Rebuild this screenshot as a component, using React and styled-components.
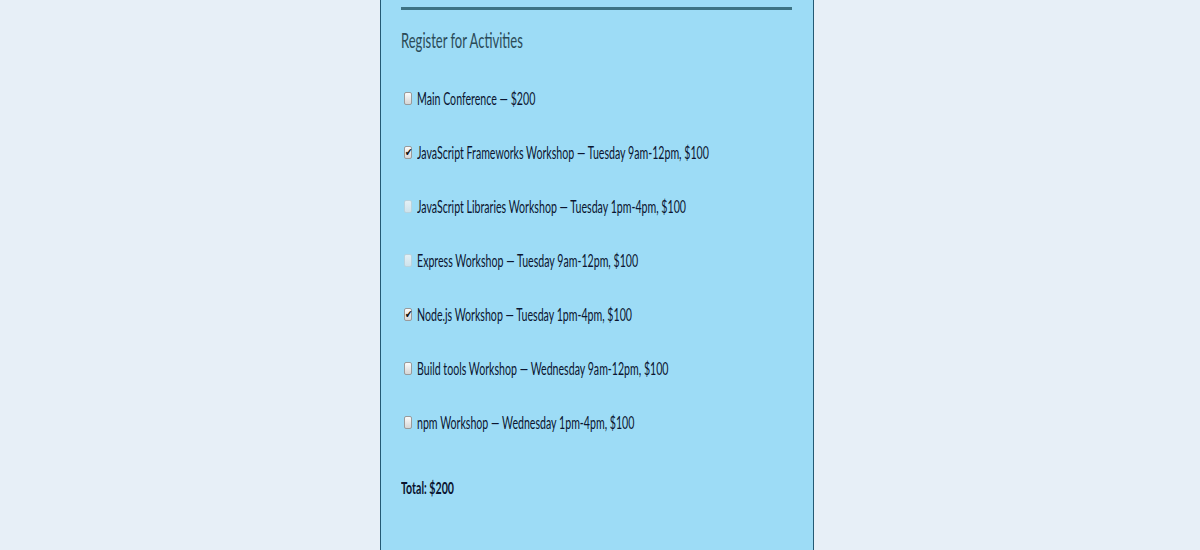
import React from "react";
import styled, { createGlobalStyle } from "styled-components";

const SQUEEZE = 0.624;

const Global = createGlobalStyle`
  html, body { margin: 0; padding: 0; }
  body {
    background: #e7eff7;
    font-family: Lato, "Open Sans", sans-serif;
    height: 550px;
    overflow: hidden;
  }
`;

const Page = styled.div`
  display: flex;
  justify-content: center;
  padding-right: 6px;
  height: 550px;
`;

const Card = styled.form`
  width: 391px;
  padding: 0 21px 0 20px;
  background: #9ddcf6;
  border-left: 1px solid #245a74;
  border-right: 1px solid #245a74;
  display: flex;
  flex-direction: column;
`;

const Rule = styled.hr`
  margin: 7px 0 0;
  border: none;
  height: 3px;
  background: #3d7384;
`;

const Squeeze = styled.span`
  display: inline-block;
  transform: scaleX(${(p) => p.$scale || SQUEEZE});
  transform-origin: left center;
  white-space: nowrap;
`;

const Heading = styled.h2`
  margin: 16px 0 0;
  height: 26px;
  font-size: 21px;
  font-weight: 400;
  color: #2b4b58;
  display: flex;
  align-items: center;
`;

const List = styled.div`
  margin-top: 36px;
  display: flex;
  flex-direction: column;
  gap: 34px;
`;

const Row = styled.label`
  height: 20px;
  display: flex;
  align-items: center;
  gap: 5px;
  font-size: 17px;
  color: #0b1530;
`;

const Box = styled.input.attrs({ type: "checkbox" })`
  appearance: none;
  position: relative;
  flex: none;
  margin: 0 0 0 3px;
  width: 8px;
  height: 13px;
  box-sizing: border-box;
  border: 1px solid ${(p) => (p.disabled ? "#b9d3de" : "#9a9a9a")};
  border-radius: 2px;
  background: ${(p) =>
    p.disabled
      ? "linear-gradient(#e4f0f5, #cfe3ec)"
      : "linear-gradient(#fbfbfb, #d6d6d6)"};

  &:checked::after {
    content: "\\2714";
    position: absolute;
    left: -1px;
    top: -3px;
    font-size: 11px;
    line-height: 16px;
    color: #111;
    transform: scaleX(0.8);
  }
`;

const Total = styled.p`
  margin: 45px 0 0;
  height: 20px;
  display: flex;
  align-items: center;
  font-size: 17px;
  font-weight: 700;
  color: #0b1530;
`;

const activities = [
  { label: "Main Conference \u2014 $200", checked: false, disabled: false },
  { label: "JavaScript Frameworks Workshop \u2014 Tuesday 9am-12pm, $100", checked: true, disabled: false },
  { label: "JavaScript Libraries Workshop \u2014 Tuesday 1pm-4pm, $100", checked: false, disabled: true },
  { label: "Express Workshop \u2014 Tuesday 9am-12pm, $100", checked: false, disabled: true },
  { label: "Node.js Workshop \u2014 Tuesday 1pm-4pm, $100", checked: true, disabled: false },
  { label: "Build tools Workshop \u2014 Wednesday 9am-12pm, $100", checked: false, disabled: false },
  { label: "npm Workshop \u2014 Wednesday 1pm-4pm, $100", checked: false, disabled: false },
];

export default function App() {
  return (
    <>
      <Global />
      <Page>
        <Card onSubmit={(e) => e.preventDefault()}>
          <Rule />
          <Heading>
            <Squeeze $scale={0.62}>Register for Activities</Squeeze>
          </Heading>
          <List>
            {activities.map((a) => (
              <Row key={a.label}>
                <Box defaultChecked={a.checked} disabled={a.disabled} />
                <Squeeze>{a.label}</Squeeze>
              </Row>
            ))}
          </List>
          <Total>
            <Squeeze>Total: $200</Squeeze>
          </Total>
        </Card>
      </Page>
    </>
  );
}
